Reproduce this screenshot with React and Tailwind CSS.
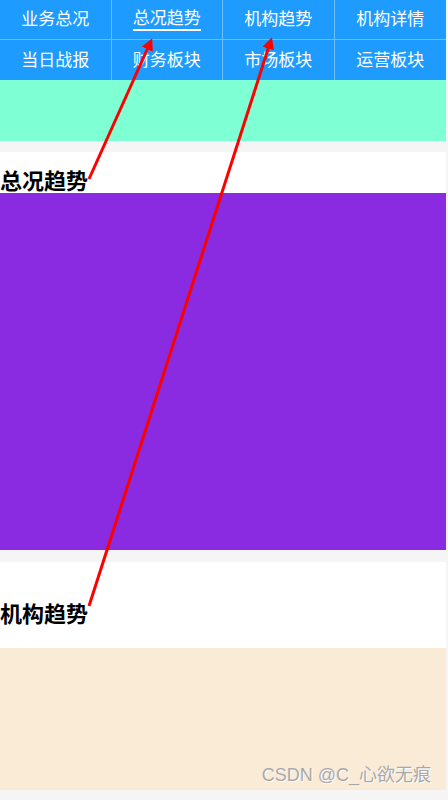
const tabs = [
  "业务总况",
  "总况趋势",
  "机构趋势",
  "机构详情",
  "当日战报",
  "财务板块",
  "市场板块",
  "运营板块",
];

const cjk = { fontFamily: '"Noto Sans CJK SC", "Noto Sans", sans-serif' };

export default function App() {
  return (
    <div className="relative w-[448px] h-[800px] overflow-hidden bg-[#f5f5f5]" style={cjk}>
      <div className="w-[446px] flex flex-col">
        <nav className="grid grid-cols-4 bg-[#1e9bff]">
          {tabs.map((t, i) => (
            <div
              key={t}
              className={`h-[40px] flex items-start justify-center text-white text-[17px] border-[#6cbcff] ${
                i % 4 !== 3 ? "border-r" : ""
              } ${i < 4 ? "border-b pt-[5px]" : "pt-[6px]"}`}
            >
              <span className={i === 1 ? "border-b-2 border-white leading-[23px] pb-[1px]" : "leading-[25px]"}>
                {t}
              </span>
            </div>
          ))}
        </nav>

        <div className="h-[61px] bg-[#7fffd4]" />
        <div className="h-[11px]" />

        <section className="bg-white">
          <h2 className="h-[41px] flex items-end text-[22px] font-bold text-black leading-[28px]">
            总况趋势
          </h2>
          <div className="h-[357px] bg-[#8a2be2]" />
        </section>
        <div className="h-[12px]" />

        <section className="bg-white">
          <div className="h-[86px] flex items-center pt-[14px] text-[22px] font-bold text-black">
            机构趋势
          </div>
          <div className="h-[142px] bg-[#faebd7] relative">
            <span
              className="absolute right-[15px] bottom-[1px] text-[18px] text-[#a8a8a8]"
              style={{ fontFamily: '"Liberation Sans", "Noto Sans CJK SC", sans-serif', textShadow: "1px 1px 0 #ffffff" }}
            >
              CSDN @C_心欲无痕
            </span>
          </div>
        </section>
      </div>

      <svg className="absolute inset-0 pointer-events-none" width="448" height="800">
        <defs>
          <marker id="ah" markerWidth="12" markerHeight="12" refX="9" refY="6" orient="auto" markerUnits="userSpaceOnUse">
            <path d="M0,0 L12,6 L0,12 Z" fill="#ff0000" />
          </marker>
        </defs>
        <line x1="89" y1="179" x2="151" y2="41" stroke="#ff0000" strokeWidth="3" markerEnd="url(#ah)" />
        <line x1="89" y1="606" x2="271" y2="40" stroke="#ff0000" strokeWidth="3" markerEnd="url(#ah)" />
      </svg>
    </div>
  );
}
